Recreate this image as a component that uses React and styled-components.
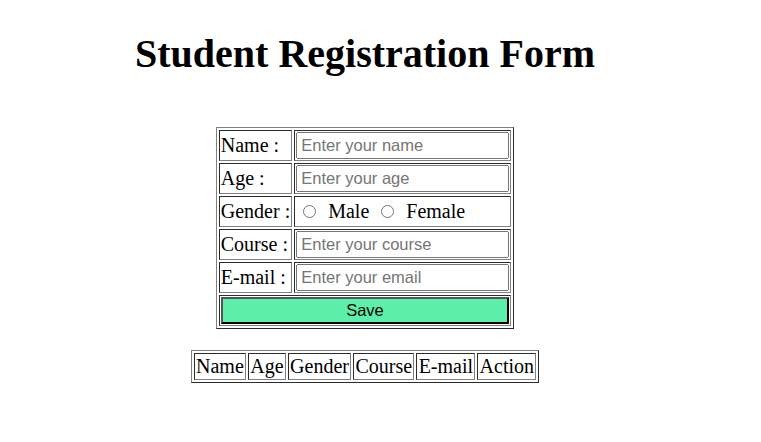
import React from "react";
import styled, { createGlobalStyle } from "styled-components";

const Global = createGlobalStyle`
  body {
    margin: 0;
    background: #ffffff;
    font-family: "Liberation Serif", "Times New Roman", serif;
    font-size: 20px;
    color: #000;
  }
`;

const Page = styled.div`
  width: 730px;
  display: flex;
  flex-direction: column;
  align-items: center;
`;

const Title = styled.h1`
  margin: 31px 0 0;
  font-size: 40px;
  line-height: 46px;
  font-weight: bold;
`;

const Table = styled.table`
  border: 1px outset grey;
  border-collapse: separate;
  border-spacing: 2px;
  margin-top: ${(p) => p.$top}px;
  font-size: 20px;
`;

const Cell = styled.td`
  border: 1px inset grey;
  padding: 1px ${(p) => (p.$padX ? p.$padX : 1)}px;
  vertical-align: middle;
  white-space: nowrap;
  height: ${(p) => (p.$h ? `${p.$h}px` : "auto")};
  line-height: 23px;
`;

const Input = styled.input`
  box-sizing: border-box;
  width: 213px;
  height: 27px;
  margin: 0;
  padding: 1px 3px;
  font-family: "Liberation Sans", Arial, sans-serif;
  font-size: 16.5px;
  display: block;
  &::placeholder {
    color: #757575;
  }
`;

const Radio = styled.input`
  margin: 3px 7px 0 7px;
  width: 13px;
  height: 13px;
`;

const SaveButton = styled.button`
  box-sizing: border-box;
  display: block;
  width: 100%;
  height: 27px;
  margin: 0;
  padding: 0 6px;
  background: #5cefa9;
  border-style: solid;
  border-width: 2px;
  border-color: #555555 #000000 #000000 #555555;
  font-family: "Liberation Sans", Arial, sans-serif;
  font-size: 16.5px;
  color: #000;
`;

const fields = [
  { label: "Name :", ph: "Enter your name", type: "text" },
  { label: "Age :", ph: "Enter your age", type: "text" },
  { label: "Gender :", gender: true },
  { label: "Course :", ph: "Enter your course", type: "text" },
  { label: "E-mail :", ph: "Enter your email", type: "email" },
];

const heads = ["Name", "Age", "Gender", "Course", "E-mail", "Action"];

export default function App() {
  return (
    <>
      <Global />
      <Page>
        <Title>Student Registration Form</Title>
        <form onSubmit={(e) => e.preventDefault()}>
          <Table $top={50}>
            <tbody>
              {fields.map((f) => (
                <tr key={f.label}>
                  <Cell $h={27}>{f.label}</Cell>
                  <Cell $h={27}>
                    {f.gender ? (
                      <>
                        <Radio type="radio" name="gender" value="male" />
                        {" "}Male{" "}
                        <Radio type="radio" name="gender" value="female" />
                        {" "}Female
                      </>
                    ) : (
                      <Input type={f.type} placeholder={f.ph} />
                    )}
                  </Cell>
                </tr>
              ))}
              <tr>
                <Cell colSpan={2} $h={27}>
                  <SaveButton type="submit">Save</SaveButton>
                </Cell>
              </tr>
            </tbody>
          </Table>
        </form>
        <Table $top={21}>
          <tbody>
            <tr>
              {heads.map((h) => (
                <Cell key={h} $padX={1.25}>
                  {h}
                </Cell>
              ))}
            </tr>
          </tbody>
        </Table>
      </Page>
    </>
  );
}
